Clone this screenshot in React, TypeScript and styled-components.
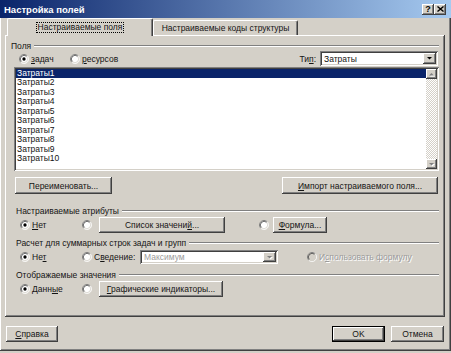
import { FC, ReactNode } from 'react';
import styled, { createGlobalStyle } from 'styled-components';

const colors = {
	face: '#d4d0c8',
	shadow: '#808080',
	darkShadow: '#404040',
	highlight: '#ffffff',
	navy: '#0a246a',
	titleEnd: '#a6caf0',
	text: '#141414',
	disabledText: '#9c9c9c',
};

const raised = `box-shadow: inset -1px -1px ${colors.darkShadow}, inset 1px 1px ${colors.highlight}, inset -2px -2px ${colors.shadow};`;
const sunken = `box-shadow: inset 1px 1px ${colors.shadow}, inset -1px -1px ${colors.highlight}, inset 2px 2px ${colors.darkShadow}, inset -2px -2px ${colors.face};`;

const GlobalStyle = createGlobalStyle`
	* { box-sizing: border-box; }
	html, body { margin: 0; padding: 0; background: ${colors.face}; }
	body {
		font-family: 'Liberation Sans', Arial, sans-serif;
		font-size: 8.5px;
		color: ${colors.text};
	}
	u { text-underline-offset: 1px; }
`;

const Window = styled.div`
	display: flex;
	flex-direction: column;
	width: 451px;
	height: 351px;
	background: ${colors.face};
	${raised}
`;

const TitleBar = styled.div`
	display: flex;
	align-items: center;
	height: 18px;
	padding: 0 5px 0 4px;
	background: linear-gradient(to right, ${colors.navy}, ${colors.titleEnd});
`;

const TitleText = styled.span`
	color: #fff;
	font-weight: bold;
	font-size: 9.5px;
`;

const TitleButtons = styled.div`
	display: flex;
	margin-left: auto;
`;

const TitleButton = styled.div`
	display: flex;
	justify-content: center;
	align-items: center;
	width: 12px;
	height: 11px;
	font-weight: bold;
	font-size: 9px;
	line-height: 1;
	color: #000;
	background: ${colors.face};
	${raised}
`;

const Body = styled.div`
	display: flex;
	flex-direction: column;
	padding: 0 6px 0 5px;
`;

const TabStrip = styled.div`
	display: flex;
	align-items: flex-end;
	height: 17px;
	padding-left: 2px;
`;

const Tab = styled.div<{ $active?: boolean; $width: number }>`
	position: relative;
	z-index: ${({ $active }) => ($active ? 1 : 0)};
	display: flex;
	justify-content: center;
	align-items: center;
	width: ${({ $width }) => $width}px;
	height: ${({ $active }) => ($active ? 18 : 15)}px;
	margin-bottom: ${({ $active }) => ($active ? -1 : 0)}px;
	background: ${colors.face};
	border-top: 1px solid ${colors.highlight};
	border-left: 1px solid ${colors.highlight};
	border-right: 1px solid ${colors.darkShadow};
	border-radius: 2px 2px 0 0;
	box-shadow: inset -1px 0 ${colors.shadow};
`;

const TabLabel = styled.span<{ $focused?: boolean }>`
	padding: 0 1px;
	line-height: 9px;
	outline: ${({ $focused }) => ($focused ? '1px dotted #000' : 'none')};
`;

const TabPage = styled.div`
	display: flex;
	flex-direction: column;
	height: 282px;
	padding: 0 6px 0 6px;
	background: ${colors.face};
	${raised}
`;

const SectionHeader = styled.div<{ $top: number; $indent: number }>`
	display: flex;
	align-items: center;
	height: 11px;
	margin-top: ${({ $top }) => $top}px;
	padding-left: ${({ $indent }) => $indent}px;
`;

const HeaderLine = styled.div`
	flex: 1;
	height: 2px;
	margin-left: 3px;
	border-top: 1px solid ${colors.shadow};
	border-bottom: 1px solid ${colors.highlight};
`;

const TypeRow = styled.div`
	display: flex;
	align-items: center;
	height: 15px;
	padding: 0 1px 0 8px;
`;

const OptionLabel = styled.label<{ $width?: number; $disabled?: boolean }>`
	display: flex;
	align-items: center;
	gap: 2px;
	width: ${({ $width }) => ($width ? `${$width}px` : 'auto')};
	flex-shrink: 0;
	color: ${({ $disabled }) => ($disabled ? colors.disabledText : colors.text)};
	text-shadow: ${({ $disabled }) => ($disabled ? `1px 1px ${colors.highlight}` : 'none')};
	white-space: nowrap;
`;

const RadioSvg = styled.svg`
	flex-shrink: 0;
	display: block;
`;

const TypeField = styled.div`
	display: flex;
	align-items: center;
	gap: 4px;
	margin-left: auto;
`;

const ComboBox = styled.div<{ $width: number; $height: number; $disabled?: boolean }>`
	display: flex;
	align-items: center;
	width: ${({ $width }) => $width}px;
	height: ${({ $height }) => $height}px;
	padding: 2px;
	background: #fff;
	color: ${({ $disabled }) => ($disabled ? colors.disabledText : colors.text)};
	${sunken}
`;

const ComboText = styled.span`
	flex: 1;
	padding-left: 2px;
	white-space: nowrap;
`;

const ComboArrow = styled.div`
	display: flex;
	justify-content: center;
	align-items: center;
	width: 13px;
	height: 100%;
	background: ${colors.face};
	${raised}
`;

const ListBox = styled.div`
	display: flex;
	height: 104px;
	margin: 1px 0 0 3px;
	padding: 2px;
	background: #fff;
	${sunken}
`;

const ListItems = styled.div`
	display: flex;
	flex-direction: column;
	flex: 1;
`;

const ListItem = styled.div<{ $selected?: boolean }>`
	height: 9.45px;
	line-height: 9.45px;
	padding-left: 1px;
	background: ${({ $selected }) => ($selected ? colors.navy : 'transparent')};
	color: ${({ $selected }) => ($selected ? '#fff' : colors.text)};
`;

const ScrollBar = styled.div`
	display: flex;
	flex-direction: column;
	width: 11px;
`;

const ScrollButton = styled.div`
	display: flex;
	justify-content: center;
	align-items: center;
	height: 10px;
	background: ${colors.face};
	${raised}
`;

const ScrollTrack = styled.div`
	flex: 1;
	background: repeating-conic-gradient(#fff 0 25%, ${colors.face} 0 50%) 0 0 / 2px 2px;
`;

const ButtonRow = styled.div`
	display: flex;
	justify-content: space-between;
	height: 17px;
	margin-top: 6px;
	padding: 0 1px 0 4px;
`;

const PushButton = styled.button<{ $width: number; $default?: boolean }>`
	display: flex;
	justify-content: center;
	align-items: center;
	width: ${({ $width }) => $width}px;
	height: 100%;
	padding: 0;
	border: none;
	font: inherit;
	color: ${colors.text};
	background: ${colors.face};
	white-space: nowrap;
	${({ $default }) =>
		$default
			? `box-shadow: inset 0 0 0 1px #000, inset -2px -2px ${colors.darkShadow}, inset 2px 2px ${colors.highlight}, inset -3px -3px ${colors.shadow};`
			: raised}
`;

const OptionRow = styled.div<{ $top: number; $height: number }>`
	display: flex;
	align-items: center;
	height: ${({ $height }) => $height}px;
	margin-top: ${({ $top }) => $top}px;
	padding-left: 9px;
`;

const Cell = styled.div<{ $width: number }>`
	display: flex;
	align-items: center;
	width: ${({ $width }) => $width}px;
	height: 100%;
	flex-shrink: 0;
`;

const DialogButtons = styled.div`
	display: flex;
	gap: 6px;
	height: 16px;
	margin-top: 9px;
	padding: 0 1px 0 1px;
`;

const Spacer = styled.div`
	flex: 1;
`;

const Radio: FC<{ checked?: boolean; disabled?: boolean }> = ({ checked, disabled }) => (
	<RadioSvg width={10} height={10} viewBox="0 0 12 12">
		<circle cx={6} cy={6} r={5} fill={disabled ? colors.face : '#fff'} />
		<path d="M2.11 9.89A5.5 5.5 0 0 1 9.89 2.11" stroke={colors.shadow} fill="none" />
		<path d="M9.89 2.11A5.5 5.5 0 0 1 2.11 9.89" stroke={colors.highlight} fill="none" />
		<path d="M2.82 9.18A4.5 4.5 0 0 1 9.18 2.82" stroke={colors.darkShadow} fill="none" />
		<path d="M9.18 2.82A4.5 4.5 0 0 1 2.82 9.18" stroke={colors.face} fill="none" />
		{checked && <circle cx={6} cy={6} r={2} fill="#000" />}
	</RadioSvg>
);

const Option: FC<{ checked?: boolean; disabled?: boolean; width?: number; children?: ReactNode }> = ({
	checked,
	disabled,
	width,
	children,
}) => (
	<OptionLabel $width={width} $disabled={disabled}>
		<Radio checked={checked} disabled={disabled} />
		{children}
	</OptionLabel>
);

const Arrow: FC<{ down?: boolean; disabled?: boolean }> = ({ down = true, disabled }) => (
	<svg width={7} height={5} viewBox="0 0 7 5">
		{disabled && (
			<polygon points={down ? '2,2 7,2 4.5,4.5' : '2,4.5 7,4.5 4.5,2'} fill={colors.highlight} />
		)}
		<polygon
			points={down ? '1,1 6,1 3.5,3.5' : '1,3.5 6,3.5 3.5,1'}
			fill={disabled ? colors.shadow : '#000'}
		/>
	</svg>
);

const fields = Array.from({ length: 10 }, (_, i) => `Затраты${i + 1}`);

const App: FC = () => (
	<>
		<GlobalStyle />
		<Window>
			<TitleBar>
				<TitleText>Настройка полей</TitleText>
				<TitleButtons>
					<TitleButton>?</TitleButton>
					<TitleButton>
						<svg width={7} height={6} viewBox="0 0 7 6">
							<path d="M0.5 0.5L6.5 5.5M6.5 0.5L0.5 5.5" stroke="#000" strokeWidth={1.4} />
						</svg>
					</TitleButton>
				</TitleButtons>
			</TitleBar>
			<Body>
				<TabStrip>
					<Tab $active $width={146}>
						<TabLabel $focused>Настраиваемые поля</TabLabel>
					</Tab>
					<Tab $width={145}>
						<TabLabel>Настраиваемые коды структуры</TabLabel>
					</Tab>
				</TabStrip>
				<TabPage>
					<SectionHeader $top={5} $indent={0}>
						Поля
						<HeaderLine />
					</SectionHeader>
					<TypeRow>
						<Option checked width={51}>
							<span>
								<u>з</u>адач
							</span>
						</Option>
						<Option>
							<span>
								<u>р</u>есурсов
							</span>
						</Option>
						<TypeField>
							<span>
								Ти<u>п</u>:
							</span>
							<ComboBox $width={118} $height={15}>
								<ComboText>Затраты</ComboText>
								<ComboArrow>
									<Arrow />
								</ComboArrow>
							</ComboBox>
						</TypeField>
					</TypeRow>
					<ListBox>
						<ListItems>
							{fields.map((name, i) => (
								<ListItem key={name} $selected={i === 0}>
									{name}
								</ListItem>
							))}
						</ListItems>
						<ScrollBar>
							<ScrollButton>
								<Arrow down={false} disabled />
							</ScrollButton>
							<ScrollTrack />
							<ScrollButton>
								<Arrow disabled />
							</ScrollButton>
						</ScrollBar>
					</ListBox>
					<ButtonRow>
						<PushButton $width={97}>Переименовать...</PushButton>
						<PushButton $width={156}>
							<span>
								<u>И</u>мпорт настраиваемого поля...
							</span>
						</PushButton>
					</ButtonRow>

					<SectionHeader $top={11} $indent={5}>
						Настраиваемые атрибуты
						<HeaderLine />
					</SectionHeader>
					<OptionRow $top={1} $height={16}>
						<Cell $width={62}>
							<Option checked>
								<span>
									<u>Н</u>ет
								</span>
							</Option>
						</Cell>
						<Cell $width={17}>
							<Radio />
						</Cell>
						<Cell $width={160}>
							<PushButton $width={126}>
								<span>
									Список значени<u>й</u>...
								</span>
							</PushButton>
						</Cell>
						<Cell $width={14}>
							<Radio />
						</Cell>
						<Cell $width={54}>
							<PushButton $width={54}>
								<span>
									<u>Ф</u>ормула...
								</span>
							</PushButton>
						</Cell>
					</OptionRow>

					<SectionHeader $top={4} $indent={5}>
						Расчет для суммарных строк задач и групп
						<HeaderLine />
					</SectionHeader>
					<OptionRow $top={2} $height={14}>
						<Cell $width={62}>
							<Option checked>
								<span>
									Не<u>т</u>
								</span>
							</Option>
						</Cell>
						<Cell $width={58}>
							<Option>
								<span>
									С<u>в</u>едение:
								</span>
							</Option>
						</Cell>
						<Cell $width={167}>
							<ComboBox $width={138} $height={14} $disabled>
								<ComboText>Максимум</ComboText>
								<ComboArrow>
									<Arrow disabled />
								</ComboArrow>
							</ComboBox>
						</Cell>
						<Option disabled>
							<span>
								И<u>с</u>пользовать формулу
							</span>
						</Option>
					</OptionRow>

					<SectionHeader $top={5} $indent={5}>
						Отображаемые значения
						<HeaderLine />
					</SectionHeader>
					<OptionRow $top={1} $height={16}>
						<Cell $width={62}>
							<Option checked>
								<span>
									Данн<u>ы</u>е
								</span>
							</Option>
						</Cell>
						<Cell $width={17}>
							<Radio />
						</Cell>
						<Cell $width={124}>
							<PushButton $width={124}>
								<span>
									<u>Г</u>рафические индикаторы...
								</span>
							</PushButton>
						</Cell>
					</OptionRow>
				</TabPage>
				<DialogButtons>
					<PushButton $width={52}>
						<span>
							<u>С</u>правка
						</span>
					</PushButton>
					<Spacer />
					<PushButton $width={53} $default>
						OK
					</PushButton>
					<PushButton $width={53}>Отмена</PushButton>
				</DialogButtons>
			</Body>
		</Window>
	</>
);

export default App;
